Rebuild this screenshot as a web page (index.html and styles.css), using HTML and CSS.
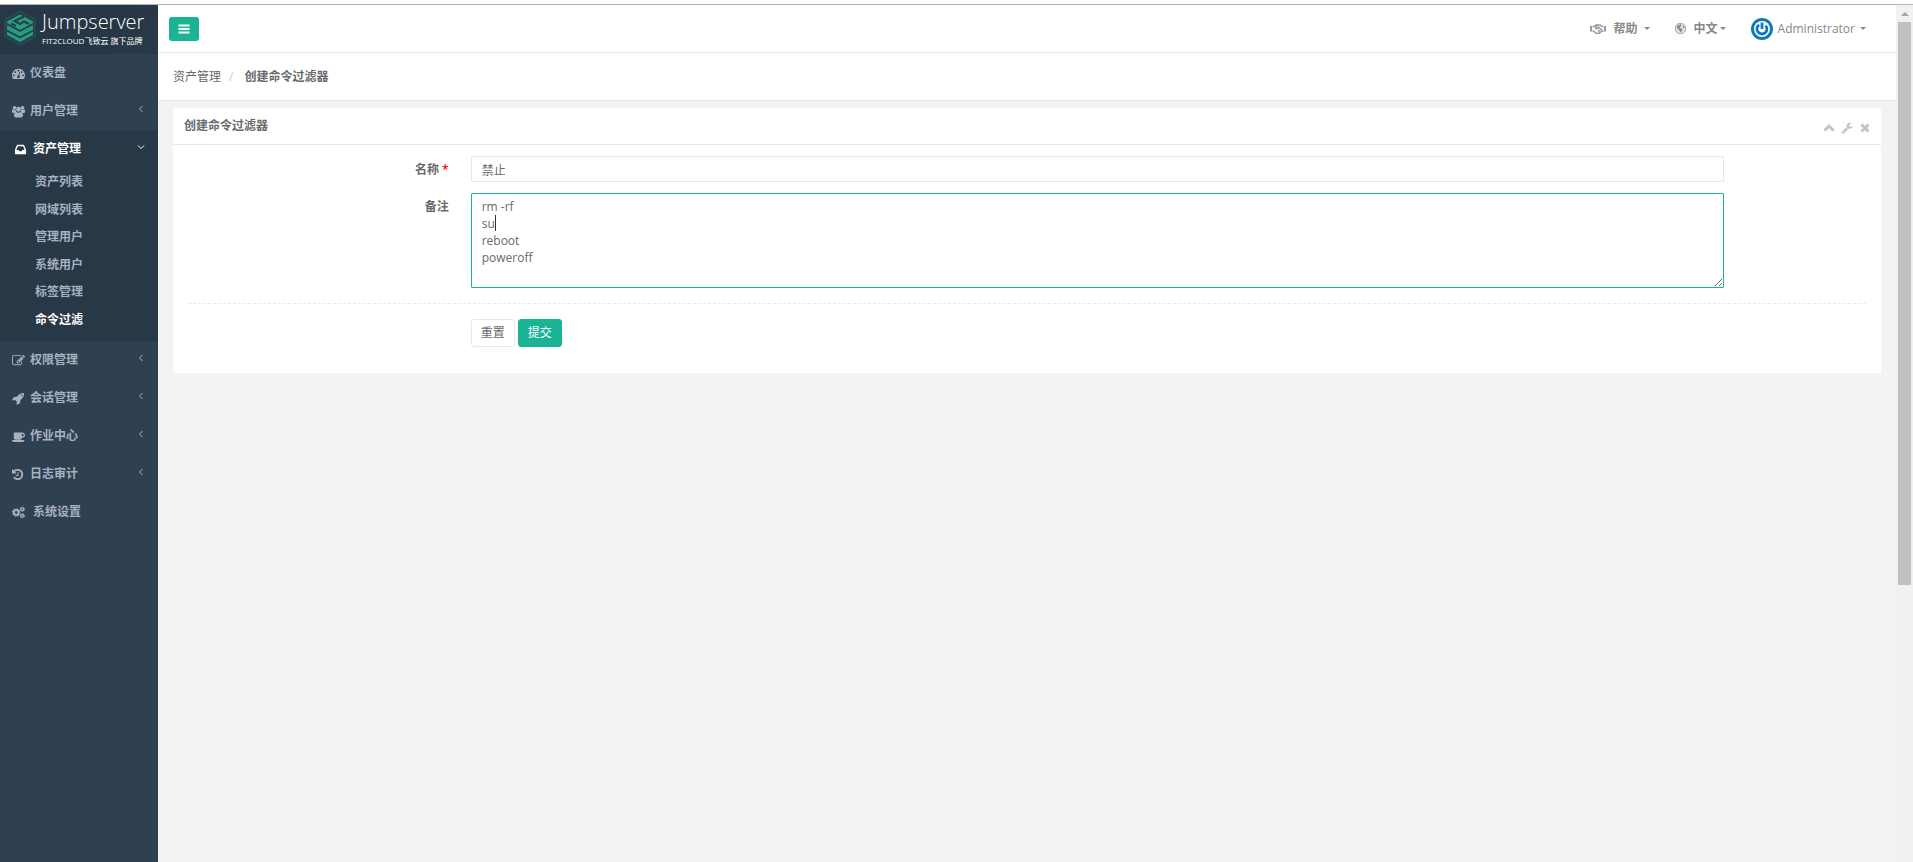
FILE: index.html
```html
<!DOCTYPE html>
<html lang="zh-CN">
  <head>
    <meta charset="UTF-8" />
    <meta name="viewport" content="width=device-width, initial-scale=1.0" />
    <title>Jumpserver</title>
    <link rel="stylesheet" href="styles.css">
  </head>
  <body>
    <div class="wrapper">
      <nav class="sidebar">
        <a class="logo" href="#">
          <svg class="logo-mark" viewBox="0 0 32 36">
            <path class="logo-hex" d="M16 1L31 9.500V26.500L16 35L1 26.500V9.500z" />
            <path d="M16 4.500L29 11.500V13L16 20L3 13V11.500z" />
            <path class="logo-cut" d="M20 6.500L10.500 11L16 14L20 11.500L25 14M7 13.500L12 16" />
            <path d="M3 15L16 22L29 15V19.500L16 26.500L3 19.500z" />
            <path d="M3 21.500L16 28.500L29 21.500V25L16 32L3 25z" />
          </svg>
          <span class="logo-text">
            <span class="logo-name">Jumpserver</span>
            <span class="logo-sub">FIT2CLOUD飞致云 旗下品牌</span>
          </span>
        </a>

        <ul class="menu">
          <li>
            <a href="#">
              <svg class="icon" viewBox="0 0 1792 1792"><path d="M384 1152q0-53-37.500-90.500t-90.500-37.500-90.500 37.500-37.500 90.500 37.500 90.500 90.500 37.500 90.500-37.500 37.500-90.500zm192-448q0-53-37.500-90.500t-90.500-37.500-90.500 37.500-37.500 90.500 37.500 90.500 90.500 37.500 90.500-37.500 37.500-90.500zm428 481l101-382q6-26-7.500-48.500t-38.500-29.500-48 6.500-30 39.500l-101 382q-60 5-107 43.500t-63 98.500q-20 77 20 146t117 89 146-20 89-117q16-60-6-117t-72-91zm660-33q0-53-37.500-90.500t-90.500-37.500-90.500 37.500-37.500 90.500 37.500 90.500 90.500 37.500 90.500-37.500 37.500-90.500zm-640-640q0-53-37.500-90.500t-90.500-37.500-90.500 37.500-37.500 90.500 37.500 90.500 90.500 37.500 90.500-37.500 37.500-90.500zm448 192q0-53-37.500-90.500t-90.500-37.500-90.500 37.500-37.500 90.500 37.500 90.500 90.500 37.500 90.500-37.500 37.500-90.500zm320 448q0 261-141 483-19 29-54 29h-1402q-35 0-54-29-141-221-141-483 0-182 71-348t191-286 286-191 348-71 348 71 286 191 191 286 71 348z" /></svg>
              <span>仪表盘</span>
            </a>
          </li>
          <li>
            <a href="#">
              <svg class="icon" viewBox="0 0 26 24">
                <circle cx="5" cy="4.500" r="3.600" />
                <circle cx="21" cy="4.500" r="3.600" />
                <circle cx="13" cy="7.500" r="4.800" />
                <path d="M0 12V10Q0 7.500 2 7.500Q5 9 7.500 8Q7.500 10.500 9 12.500Q7 12.500 6 15H2.500Q0 15 0 12zM26 12V10Q26 7.500 24 7.500Q21 9 18.500 8Q18.500 10.500 17 12.500Q19 12.500 20 15H23.500Q26 15 26 12z" />
                <path d="M4 20Q4 13 8.800 13Q13 15.500 17.200 13Q22 13 22 20Q22 24 18 24H8Q4 24 4 20z" />
              </svg>
              <span>用户管理</span>
              <svg class="arrow" viewBox="0 0 8 8"><path d="M5.500 1L2.500 4L5.500 7" /></svg>
            </a>
          </li>
          <li class="active">
            <a href="#">
              <svg class="icon" viewBox="0 0 1792 1792"><path d="M1151 960h316q-1-3-2.500-8t-2.500-8l-212-496h-708l-212 496q-1 2-2.500 8t-2.500 8h316l95 192h320zm513 30v482q0 26-19 45t-45 19h-1408q-26 0-45-19t-19-45v-482q0-62 25-123l238-552q10-25 36.500-42t52.500-17h832q26 0 52.500 17t36.500 42l238 552q25 61 25 123z" /></svg>
              <span>资产管理</span>
              <svg class="arrow" viewBox="0 0 8 8"><path d="M1 2.500L4 5.500L7 2.500" /></svg>
            </a>
            <ul class="submenu">
              <li><a href="#">资产列表</a></li>
              <li><a href="#">网域列表</a></li>
              <li><a href="#">管理用户</a></li>
              <li><a href="#">系统用户</a></li>
              <li><a href="#">标签管理</a></li>
              <li><a class="current" href="#">命令过滤</a></li>
            </ul>
          </li>
          <li>
            <a href="#">
              <svg class="icon" viewBox="0 0 1792 1792"><path d="M888 1184l116-116-152-152-116 116v56h96v96h56zm440-720q-16-16-33 1l-350 350q-17 17-1 33t33-1l350-350q17-17 1-33zm80 594v190q0 119-84.500 203.500t-203.500 84.500h-832q-119 0-203.500-84.500t-84.500-203.500v-832q0-119 84.500-203.500t203.500-84.500h832q63 0 117 25 15 7 18 23 3 17-9 29l-49 49q-14 14-32 8-23-6-45-6h-832q-66 0-113 47t-47 113v832q0 66 47 113t113 47h832q66 0 113-47t47-113v-126q0-13 9-22l64-64q15-15 35-7t20 29zm-96-738l288 288-672 672h-288v-288zm444 132l-92 92-288-288 92-92q28-28 68-28t68 28l152 152q28 28 28 68t-28 68z" /></svg>
              <span>权限管理</span>
              <svg class="arrow" viewBox="0 0 8 8"><path d="M5.500 1L2.500 4L5.500 7" /></svg>
            </a>
          </li>
          <li>
            <a href="#">
              <svg class="icon" viewBox="0 0 1792 1792"><path d="M1440 448q0-40-28-68t-68-28-68 28-28 68 28 68 68 28 68-28 28-68zm224-288q0 249-75.500 430.500t-253.500 360.500q-81 80-195 176l-20 379q-2 16-16 26l-384 224q-7 4-16 4-12 0-23-9l-64-64q-13-14-8-32l85-276-281-281-276 85q-3 1-9 1-14 0-23-9l-64-64q-17-19-5-39l224-384q10-14 26-16l379-20q96-114 176-195 188-187 358-258t431-71q14 0 24 9.500t10 22.500z" /></svg>
              <span>会话管理</span>
              <svg class="arrow" viewBox="0 0 8 8"><path d="M5.500 1L2.500 4L5.500 7" /></svg>
            </a>
          </li>
          <li>
            <a href="#">
              <svg class="icon" viewBox="0 0 1856 1792"><path d="M1664 704q0-80-56-136t-136-56h-64v384h64q80 0 136-56t56-136zm-1664 704h1792q0 106-75 181t-181 75h-1280q-106 0-181-75t-75-181zm1856-704q0 159-112.500 271.500t-271.500 112.500h-64v32q0 92-66 158t-158 66h-704q-92 0-158-66t-66-158v-736q0-26 19-45t45-19h1152q159 0 271.500 112.500t112.500 271.500z" /></svg>
              <span>作业中心</span>
              <svg class="arrow" viewBox="0 0 8 8"><path d="M5.500 1L2.500 4L5.500 7" /></svg>
            </a>
          </li>
          <li>
            <a href="#">
              <svg class="icon" viewBox="128 0 1792 1792"><path d="M1664 896q0 156-61 298t-164 245-245 164-298 61q-172 0-327-72.500t-264-204.500q-7-10-6.500-22.500t8.500-20.500l137-138q10-9 25-9 16 2 23 12 73 95 179 147t225 52q104 0 198.500-40.500t163.500-109.500 109.500-163.500 40.500-198.500-40.500-198.500-109.500-163.500-163.500-109.500-198.500-40.500q-98 0-188 35.500t-160 101.500l137 138q31 30 14 69-17 40-59 40h-448q-26 0-45-19t-19-45v-448q0-42 40-59 39-17 69 14l130 129q107-101 244.500-156.500t284.500-55.500q156 0 298 61t245 164 164 245 61 298zm-640-288v448q0 14-9 23t-23 9h-320q-14 0-23-9t-9-23v-64q0-14 9-23t23-9h224v-352q0-14 9-23t23-9h64q14 0 23 9t9 23z" /></svg>
              <span>日志审计</span>
              <svg class="arrow" viewBox="0 0 8 8"><path d="M5.500 1L2.500 4L5.500 7" /></svg>
            </a>
          </li>
          <li>
            <a class="settings" href="#">
              <svg class="icon" viewBox="0 0 26 24">
                <g class="cog">
                  <circle cx="8.500" cy="12" r="4.800" stroke-width="4" />
                  <circle cx="8.500" cy="12" r="7.200" stroke-width="2.600" stroke-dasharray="2.830 2.830" />
                  <circle cx="20.500" cy="5.500" r="2.900" stroke-width="2.600" />
                  <circle cx="20.500" cy="5.500" r="4.400" stroke-width="1.800" stroke-dasharray="2.300 2.300" />
                  <circle cx="20.500" cy="18.500" r="2.900" stroke-width="2.600" />
                  <circle cx="20.500" cy="18.500" r="4.400" stroke-width="1.800" stroke-dasharray="2.300 2.300" />
                </g>
              </svg>
              <span>系统设置</span>
            </a>
          </li>
        </ul>
      </nav>

      <div class="page">
        <header class="navbar">
          <button class="toggle-btn" type="button" aria-label="菜单">
            <svg viewBox="0 0 12 10"><path d="M0.500 0.500h11v2h-11zM0.500 4h11v2h-11zM0.500 7.500h11v2h-11z" /></svg>
          </button>
          <div class="nav-links">
            <a class="nav-link" href="#">
              <svg class="handshake" viewBox="0 0 32 20">
                <path class="cuff" d="M0 4H4V15H0zM32 4H28V15H32z" />
                <path d="M5 5H8L12 2H15M27 5H24L20 2H16L11 7.500Q12 11 15.500 8.500L18 7L24.500 13.500M5 14H7L12 18.500Q16 20 20 17.500L24.500 14H27M16 12L20 16" />
              </svg>
              <b>帮助</b>
              <span class="caret"></span>
            </a>
            <a class="nav-link lang" href="#">
              <svg class="globe" viewBox="0 0 24 24">
                <circle cx="12" cy="12" r="11.500" />
                <path d="M12 2.500L15 4L13 7L10 9L13 12L17 14L14 18L12 21L10 17L8 14L4 11L3.500 8L7 5zM18 5L21 9L20 12L17 9z" />
              </svg>
              <b>中文</b><span class="caret"></span>
            </a>
            <a class="nav-link user" href="#">
              <svg class="avatar" viewBox="0 0 22 22">
                <circle cx="11" cy="11" r="11" fill="#0f7ab8" />
                <circle cx="11" cy="11" r="8" fill="#ffffff" />
                <path d="M8.200 6.800A5 5 0 1 0 14.600 7.600M11 4.500V11" fill="none" stroke="#0f7ab8" stroke-width="2.800" />
              </svg>
              <span>Administrator</span>
              <span class="caret"></span>
            </a>
          </div>
        </header>

        <ol class="breadcrumb">
          <li><a href="#">资产管理</a></li>
          <li><strong>创建命令过滤器</strong></li>
        </ol>

        <main class="panel">
          <div class="panel-title">
            <h5>创建命令过滤器</h5>
            <div class="panel-tools">
              <button type="button" aria-label="折叠">
                <svg viewBox="0 0 12 12"><path class="line" d="M1.500 8.500L6 4L10.500 8.500" /></svg>
              </button>
              <button type="button" aria-label="设置">
                <svg viewBox="0 0 1792 1792"><path d="M448 1472q0-26-19-45t-45-19-45 19-19 45 19 45 45 19 45-19 19-45zm644-420l-682 682q-37 37-90 37-52 0-91-37l-106-108q-38-36-38-90 0-53 38-91l681-681q39 98 114.500 173.500t173.500 114.500zm634-435q0 39-23 106-47 134-164.500 217.500t-258.500 83.500q-185 0-316.500-131.500t-131.500-316.500 131.500-316.500 316.500-131.500q58 0 121.500 16.500t107.500 46.500q16 11 16 28t-16 28l-293 169v224l193 107q5-3 79-48.500t135.500-81 70.500-35.500q15 0 23.500 10t8.500 25z" /></svg>
              </button>
              <button type="button" aria-label="关闭">
                <svg viewBox="0 0 12 12"><path class="line" d="M2.500 2.500L9.500 9.500M9.500 2.500L2.500 9.500" /></svg>
              </button>
            </div>
          </div>

          <form class="panel-content">
            <div class="form-group">
              <label for="name">名称 <span class="required">*</span></label>
              <div class="field"><input type="text" id="name" value="禁止" /></div>
            </div>
            <div class="form-group">
              <label for="comment">备注</label>
              <div class="field comment-field">
                <textarea id="comment" rows="5" spellcheck="false">rm -rf
su
reboot
poweroff</textarea>
                <span class="text-cursor"></span>
              </div>
            </div>
            <hr class="divider" />
            <div class="form-group">
              <div class="field buttons">
                <button class="btn btn-white" type="reset">重置</button>
                <button class="btn btn-primary" type="submit">提交</button>
              </div>
            </div>
          </form>
        </main>
      </div>

      <div class="scrollbar">
        <span class="scroll-up"></span>
        <span class="scroll-thumb"></span>
        <span class="scroll-rest"></span>
      </div>
    </div>
  </body>
</html>
```

FILE: styles.css
```css
* {
  box-sizing: border-box;
}
body {
  margin: 0;
  padding-top: 4px;
  min-height: 100vh;
  display: flex;
  background-color: #ffffff;
  color: #676a6c;
  font-family: "Open Sans", "Noto Sans CJK SC", sans-serif;
  font-size: 12px;
  line-height: 18px;
}
a {
  color: inherit;
  text-decoration: none;
}
ul,
ol {
  list-style: none;
  margin: 0;
  padding: 0;
}
button,
input,
textarea {
  font: inherit;
  color: inherit;
}
.wrapper {
  flex: 1;
  display: flex;
  border-top: 1px solid #b4b4b4;
}

/* sidebar */
.sidebar {
  width: 158px;
  flex-shrink: 0;
  background-color: #2f4050;
  color: #a7b1c2;
  font-weight: 600;
}
.logo {
  display: flex;
  gap: 6px;
  height: 49px;
  padding: 5px 4px;
  background: linear-gradient(135deg, #293846, #263644 60%, #2a3a49);
}
.logo-mark {
  width: 32px;
  height: 36px;
  fill: #269c80;
}
.logo-hex {
  fill: #263f48;
  stroke: #265a56;
}
.logo-cut {
  fill: none;
  stroke: #263f48;
  stroke-width: 2;
}
.logo-text {
  display: flex;
  flex-direction: column;
  color: #ffffff;
}
.logo-name {
  font-weight: 300;
  font-size: 20px;
  line-height: 24px;
}
.logo-sub {
  font-weight: 400;
  font-size: 8px;
  line-height: 14px;
  white-space: nowrap;
}
.menu > li > a {
  display: flex;
  align-items: center;
  gap: 5px;
  height: 38px;
  padding: 0 13px 0 12px;
}
.icon {
  width: 13px;
  height: 13px;
  fill: currentColor;
}
.cog {
  fill: none;
  stroke: currentColor;
}
.menu .settings {
  gap: 8px;
}
.arrow {
  width: 8px;
  height: 8px;
  margin: 0 0 5px auto;
  fill: none;
  stroke: currentColor;
}
.menu .active {
  background-color: #293846;
}
.menu .active > a {
  padding-left: 14px;
  gap: 6px;
  color: #ffffff;
}
.submenu {
  padding-bottom: 8px;
}
.submenu a {
  display: flex;
  align-items: center;
  height: 28px;
  padding-left: 35px;
}
.submenu li:nth-child(even) a {
  height: 27px;
}
.submenu .current {
  color: #ffffff;
}

/* top bar */
.page {
  flex: 1;
  background-color: #f3f3f3;
}
.navbar {
  display: flex;
  align-items: center;
  justify-content: space-between;
  height: 48px;
  padding: 0 30px 0 11px;
  background-color: #ffffff;
  border-bottom: 1px solid #e7eaec;
}
.toggle-btn {
  display: flex;
  align-items: center;
  justify-content: center;
  width: 30px;
  height: 24px;
  padding: 0;
  border: none;
  border-radius: 3px;
  background-color: #1ab394;
  cursor: pointer;
}
.toggle-btn svg {
  width: 12px;
  height: 10px;
  fill: #ffffff;
}
.nav-links {
  display: flex;
  align-items: center;
  gap: 25px;
  color: #888888;
}
.nav-link {
  display: flex;
  align-items: center;
  gap: 6px;
}
.handshake {
  width: 16px;
  height: 10px;
  margin-right: 2px;
  fill: none;
  stroke: #999c9e;
  stroke-width: 3;
}
.handshake .cuff {
  fill: #999c9e;
  stroke: none;
}
.globe {
  width: 11px;
  height: 11px;
  margin-right: 2px;
  fill: #e4e4e4;
}
.globe path {
  fill: #888b8d;
}
.globe circle {
  stroke: #999c9e;
  stroke-width: 2;
}
.lang .caret {
  margin-left: -4px;
}
.user {
  gap: 5px;
}
.avatar {
  width: 22px;
  height: 22px;
}
.caret {
  border-top: 3px solid #888888;
  border-left: 3px solid transparent;
  border-right: 3px solid transparent;
}
.breadcrumb {
  display: flex;
  align-items: center;
  height: 48px;
  padding: 0 15px;
  background-color: #ffffff;
  border-bottom: 1px solid #e7eaec;
}
.breadcrumb li + li::before {
  content: "/";
  padding: 0 11px 0 8px;
  color: #cccccc;
}

/* form panel */
.panel {
  margin: 7px 15px;
  background-color: #ffffff;
}
.panel-title {
  display: flex;
  justify-content: space-between;
  height: 37px;
  padding: 9px 10px 0 11px;
  border-bottom: 1px solid #e7eaec;
}
.panel-title h5 {
  margin: 0;
  font-size: 12px;
  font-weight: 600;
}
.panel-tools {
  display: flex;
  gap: 6px;
  padding-top: 5px;
}
.panel-tools button {
  display: flex;
  width: 12px;
  height: 12px;
  padding: 0;
  border: none;
  background: none;
  cursor: pointer;
}
.panel-tools svg {
  width: 12px;
  height: 12px;
  fill: #c4c4c4;
}
.panel-tools .line {
  fill: none;
  stroke: #c4c4c4;
  stroke-width: 3;
}
.panel-content {
  padding: 11px 0 15px;
}
.form-group {
  display: grid;
  grid-template-columns: 2fr 9fr 1fr;
  margin-bottom: 11px;
}
.form-group label {
  padding: 5px 9px 0 0;
  text-align: right;
  font-weight: 600;
}
.required {
  color: #ff0000;
}
.field {
  grid-column: 2;
  padding: 0 15px 0 13px;
}
.field input,
.field textarea {
  display: block;
  width: 100%;
  padding: 4px 10px 3px;
  border: 1px solid #e5e6e7;
  border-radius: 1px;
  background-color: #ffffff;
  outline: none;
}
.field input {
  height: 26px;
}
.comment-field {
  position: relative;
}
.field textarea {
  height: 95px;
  border-color: #1ab394;
  line-height: 17px;
  resize: vertical;
}
.text-cursor {
  position: absolute;
  top: 22px;
  left: 37px;
  width: 1px;
  height: 16px;
  background-color: #333333;
}
.divider {
  margin: 15px;
  border: none;
  border-top: 1px dashed #e7eaec;
}
.buttons {
  display: flex;
  gap: 3px;
}
.btn {
  width: 44px;
  height: 28px;
  padding: 0;
  border: 1px solid #e7eaec;
  border-radius: 3px;
  background-color: #ffffff;
  cursor: pointer;
}
.btn-primary {
  border-color: #1ab394;
  background-color: #1ab394;
  color: #ffffff;
}

/* scrollbar at the right edge */
.scrollbar {
  display: flex;
  flex-direction: column;
  width: 17px;
  padding: 0 2px 17px;
  background-color: #f1f1f1;
}
.scroll-up {
  height: 17px;
  display: flex;
  align-items: center;
  justify-content: center;
}
.scroll-up::before {
  content: "";
  border-bottom: 4px solid #a3a3a3;
  border-left: 4px solid transparent;
  border-right: 4px solid transparent;
}
.scroll-thumb {
  flex: 563;
  background-color: #c1c1c1;
}
.scroll-rest {
  flex: 260;
}
```
